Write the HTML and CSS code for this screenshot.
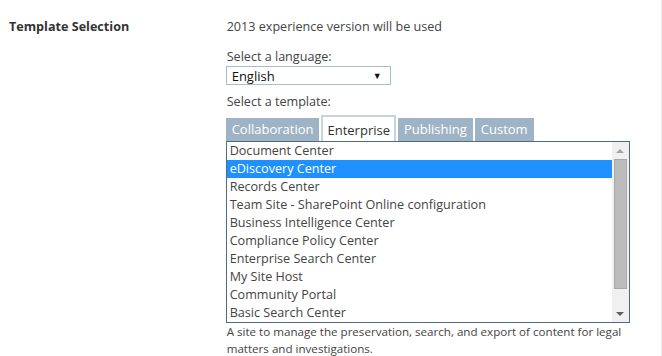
FILE: index.html
```html
<!DOCTYPE html>
<html>
<head>
    <title>Template Selection</title>
    <meta http-equiv="Content-Type" content="text/html; charset=utf-8"/>
    <link rel="stylesheet" href="styles.css">
</head>
<body>
    <div class="section">
        <div class="section-title">Template Selection</div>
        <div class="section-body">
            <div class="version-note">2013 experience version will be used</div>
            <div class="field-label lang-label">Select a language:</div>
            <div class="dropdown">
                <span>English</span>
                <span class="dropdown-arrow">&#9660;</span>
            </div>
            <div class="field-label template-label">Select a template:</div>
            <div class="tabs">
                <div class="tab">Collaboration</div>
                <div class="tab tab-active">Enterprise</div>
                <div class="tab">Publishing</div>
                <div class="tab">Custom</div>
            </div>
            <div class="listbox">
                <div class="list-items">
                    <div class="list-item">Document Center</div>
                    <div class="list-item selected">eDiscovery Center</div>
                    <div class="list-item">Records Center</div>
                    <div class="list-item">Team Site - SharePoint Online configuration</div>
                    <div class="list-item">Business Intelligence Center</div>
                    <div class="list-item">Compliance Policy Center</div>
                    <div class="list-item">Enterprise Search Center</div>
                    <div class="list-item">My Site Host</div>
                    <div class="list-item">Community Portal</div>
                    <div class="list-item">Basic Search Center</div>
                </div>
                <div class="scrollbar">
                    <div class="scroll-btn"><span class="arrow-up"></span></div>
                    <div class="scroll-track"><div class="scroll-thumb"></div></div>
                    <div class="scroll-btn"><span class="arrow-down"></span></div>
                </div>
            </div>
            <div class="description">A site to manage the preservation, search, and export of content for legal matters and investigations.</div>
        </div>
        <div class="edge-line"></div>
    </div>
</body>
</html>
```

FILE: styles.css
```css
html {
    height: 100%;
}

body {
    height: 100%;
    margin: 0;
    padding: 0;
    overflow: hidden;
    background: #ffffff;
    font-family: 'Open Sans', sans-serif;
    font-size: 12.6px;
    color: #444444;
}

.section {
    display: flex;
    height: 100%;
}

.section-title {
    width: 219px;
    padding: 18px 0 0 9px;
    line-height: 18px;
    font-size: 12.6px;
    font-weight: bold;
    color: #333333;
}

.section-body {
    width: 429px;
    padding-top: 18px;
}

.edge-line {
    width: 1px;
    margin-left: 8px;
    background: #eeeeee;
}

.version-note {
    line-height: 18px;
}

.field-label {
    line-height: 18px;
}
.lang-label {
    margin-top: 12px;
}
.template-label {
    margin-top: 8px;
}

.dropdown {
    display: flex;
    justify-content: space-between;
    align-items: center;
    box-sizing: border-box;
    width: 165px;
    height: 19px;
    margin-left: -1px;
    padding: 0 8px 0 5px;
    border: 1px solid #abbdcc;
    font-size: 13px;
    color: #111111;
}

.dropdown-arrow {
    font-size: 9px;
    color: #111111;
}

.tabs {
    display: flex;
    align-items: flex-end;
    gap: 2px;
    height: 26px;
    margin-top: 4px;
    margin-left: -1px;
}

.tab {
    height: 23px;
    line-height: 23px;
    padding: 0 6px;
    font-size: 13px;
    background: #9fb3c6;
    color: #ffffff;
}

.tab-active {
    box-sizing: border-box;
    height: 26px;
    line-height: 26px;
    padding: 0 4px;
    border: 2px solid #c8d3dd;
    border-bottom: none;
    background: #ffffff;
    color: #333333;
}

.listbox {
    display: flex;
    width: 402px;
    margin-left: -1px;
    border: 1px solid #4d6b82;
}

.list-items {
    flex: 1;
}

.list-item {
    height: 18px;
    line-height: 18px;
    padding-left: 3px;
    white-space: nowrap;
}

.list-item.selected {
    background: #1e90ff;
    color: #ffffff;
}

.scrollbar {
    display: flex;
    flex-direction: column;
    width: 17px;
    background: #f0f0f0;
}

.scroll-btn {
    height: 17px;
    display: flex;
    align-items: center;
    justify-content: center;
}

.arrow-up {
    border-left: 4px solid transparent;
    border-right: 4px solid transparent;
    border-bottom: 4px solid #a3a3a3;
}

.arrow-down {
    border-left: 4px solid transparent;
    border-right: 4px solid transparent;
    border-top: 4px solid #606060;
}

.scroll-track {
    flex: 1;
    padding: 0 2px;
}

.scroll-thumb {
    box-sizing: border-box;
    height: 130px;
    border: 1px solid #a8a8a8;
    background: #bcbcbc;
}

.description {
    width: 420px;
    font-size: 11.6px;
    line-height: 17px;
}
```
